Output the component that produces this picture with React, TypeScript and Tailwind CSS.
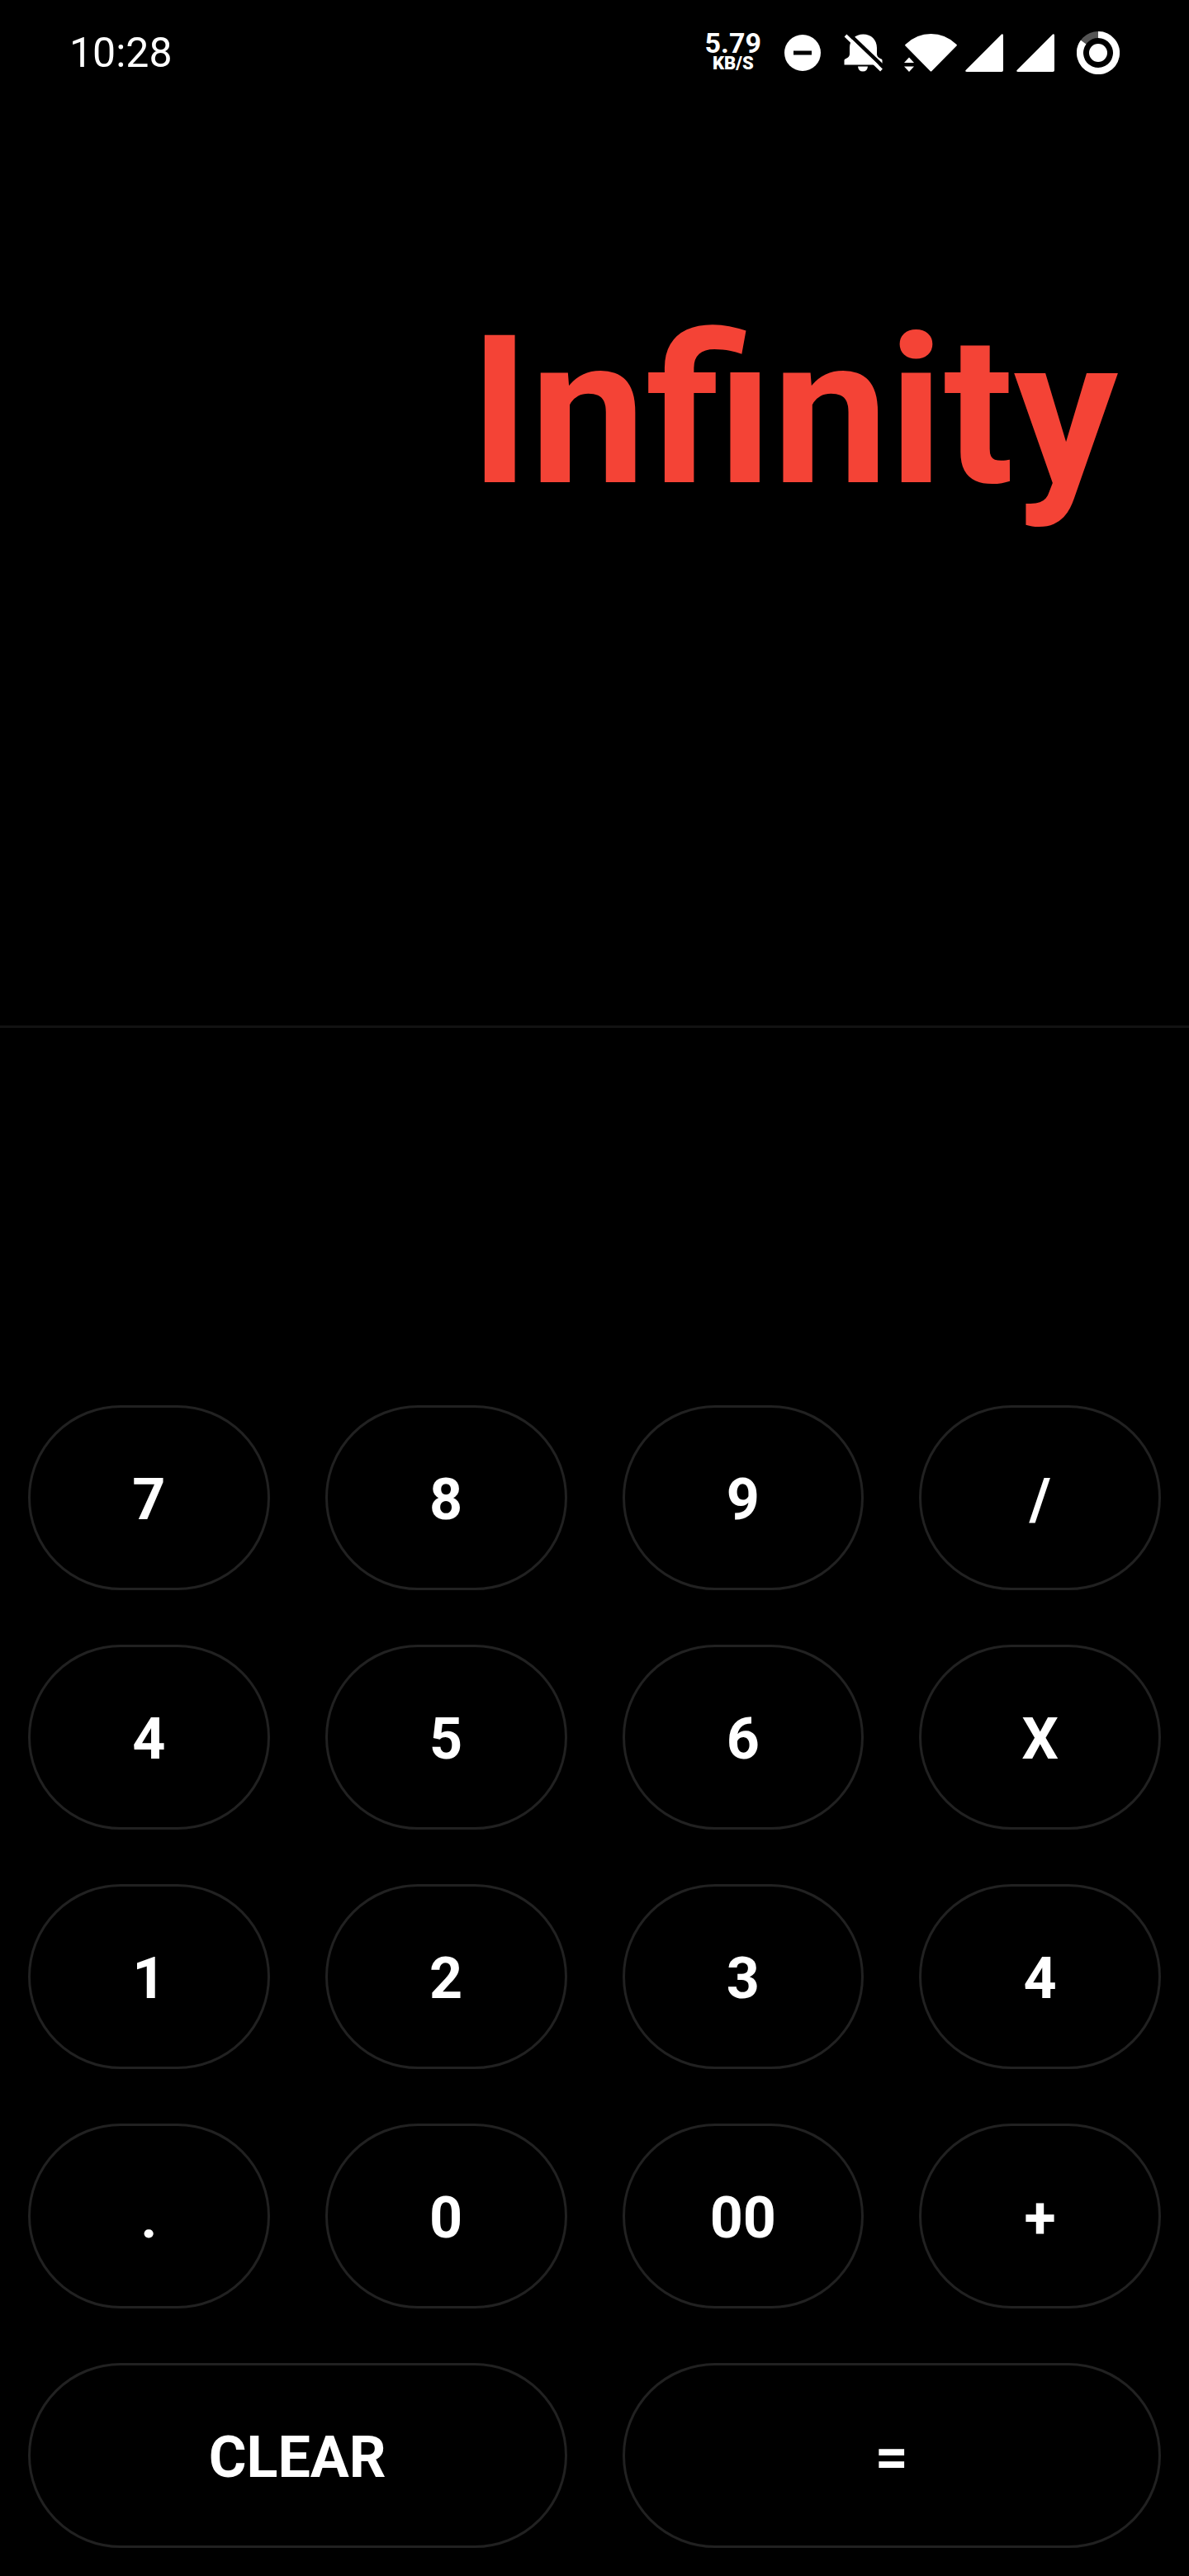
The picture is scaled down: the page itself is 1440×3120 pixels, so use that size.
import React, { useState } from "react";

const keys = ["7", "8", "9", "/", "4", "5", "6", "X", "1", "2", "3", "4", ".", "0", "00", "+"];

function SignalIcon() {
  return (
    <svg className="h-[46px] w-[46px]" viewBox="0 0 46 46" fill="white" aria-hidden="true">
      <path d="M44 .6 L.6 44 Q-.6 46 2 46 H44 Q46 46 46 44 V1.5 Q45.500 -.5 44 .6Z" />
    </svg>
  );
}

function StatusBar() {
  return (
    <header className="flex h-32 items-center justify-between px-[84px] text-white">
      <time className="text-[50px] leading-none">10:28</time>
      <div className="flex items-center">
        <p className="mr-7 flex flex-col items-center font-bold">
          <span className="text-[34px] leading-[26px]">5.79</span>
          <span className="text-[22px] leading-6 font-black">KB/S</span>
        </p>
        <svg className="mr-7 h-11 w-11" viewBox="0 0 44 44" aria-hidden="true">
          <circle cx="22" cy="22" r="22" fill="white" />
          <path d="M11 19.500h22v5h-22z" fill="black" />
        </svg>
        <svg className="mr-[26px] h-[46px] w-[47px]" viewBox="0 0 47 46" fill="white" aria-hidden="true">
          <path d="M.5 37.500V32Q.5 31 1.500 30.500C5 29 7 27.500 7 24V17C7 7 14 .5 23.500 .5S40 7 40 17V24C40 27.500 42 29 45.500 30.500Q46.500 31 46.500 32V37.500Z" />
          <path d="M17 39.500H29Q28.500 45.500 23 45.500T17 39.500Z" />
          <path d="M3.500 -2.500L49.500 41.500" stroke="black" strokeWidth="4.500" />
          <path d="M2 2L45.500 44" stroke="white" strokeWidth="4" />
        </svg>
        <svg className="mr-[10px] h-[46px] w-16" viewBox="0 0 64 46" fill="white" aria-hidden="true">
          <path d="M1.500 14.500 Q0.500 13.500 2 12.500 Q15 0 32.500 0 T63 12.500 Q64.500 13.500 63.500 14.500 L33.500 45 Q32.500 46 31.500 45Z" />
          <path d="M0 35L6 28.500L12 35Z M0 39.500H12L6 46Z" />
        </svg>
        <div className="mr-[27px] flex gap-4">
          <SignalIcon />
          <SignalIcon />
        </div>
        <svg className="h-[52px] w-[52px]" viewBox="0 0 52 52" fill="none" aria-hidden="true">
          <circle cx="26" cy="26" r="22" stroke="#555555" strokeWidth="8" />
          <path d="M26 4A22 22 0 1 1 8.200 13.070" stroke="white" strokeWidth="8" />
          <circle cx="26" cy="26" r="11" fill="white" />
        </svg>
      </div>
    </header>
  );
}

function Key({ label, wide = false, onPress }: { label: string; wide?: boolean; onPress: () => void }) {
  return (
    <button
      type="button"
      onClick={onPress}
      className={
        (wide ? "col-span-2 " : "") +
        "flex h-56 items-center justify-center rounded-full border-[3px] border-[#212121] pt-1 text-[70px] leading-none font-bold text-white"
      }
    >
      {label}
    </button>
  );
}

export default function App() {
  const [display, setDisplay] = useState("Infinity");
  const press = (key: string) => setDisplay((value) => (value === "Infinity" ? key : value + key));

  return (
    <main className="flex min-h-screen flex-col bg-black font-['Roboto',sans-serif]">
      <StatusBar />
      <section className="flex h-[1117px] justify-end border-b-[3px] border-[#121212] px-[86px] pt-[245px]">
        <output className="text-[251px] leading-none font-bold text-[#f44336]">
          {display}
        </output>
      </section>
      <section className="mt-auto grid grid-cols-4 gap-x-[67px] gap-y-[66px] px-[34px] pt-8 pb-[34px]">
        {keys.map((key, index) => (
          <Key key={index} label={key} onPress={() => press(key)} />
        ))}
        <Key label="CLEAR" wide onPress={() => setDisplay("0")} />
        <Key label="=" wide onPress={() => undefined} />
      </section>
    </main>
  );
}
